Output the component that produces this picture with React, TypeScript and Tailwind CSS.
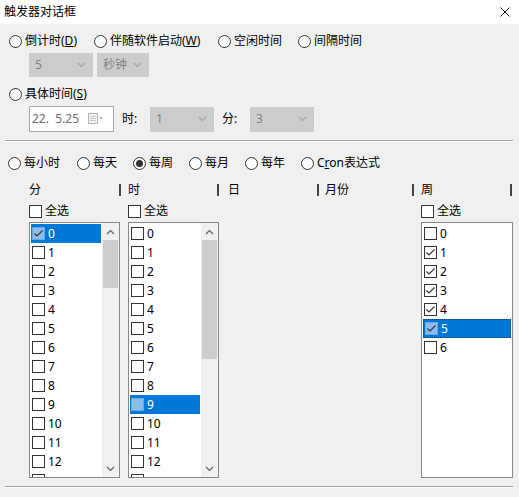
import type { ReactNode } from "react";

const FONT = { fontFamily: '"Noto Sans", "Noto Sans CJK SC", sans-serif' };

function Radio({ label, checked }: { label: ReactNode; checked?: boolean }) {
  return (
    <div className="flex h-[16px] items-center">
      <span className="flex h-[13px] w-[13px] shrink-0 items-center justify-center rounded-full border border-[#333] bg-white">
        {checked && <span className="h-[7px] w-[7px] rounded-full bg-[#333]" />}
      </span>
      <span className="ml-[3px] whitespace-nowrap">{label}</span>
    </div>
  );
}

function Check() {
  return (
    <svg width="11" height="11" viewBox="0 0 11 11" className="block">
      <polyline points="1.5,5.5 4,8 9.5,2.5" fill="none" stroke="#333" strokeWidth="1.1" />
    </svg>
  );
}

function Box({ checked, selected }: { checked?: boolean; selected?: boolean }) {
  return (
    <span
      className={`flex h-[13px] w-[13px] shrink-0 items-center justify-center border ${
        selected ? "border-[#6aa6e3] bg-[#8bbcee]" : "border-[#333] bg-white"
      }`}
    >
      {checked && <Check />}
    </span>
  );
}

function Chevron({ up, color = "#a6a6a6" }: { up?: boolean; color?: string }) {
  return (
    <svg width="9" height="6" viewBox="0 0 9 6" className="block">
      <polyline
        points={up ? "1,5 4.5,1.5 8,5" : "1,1 4.5,4.5 8,1"}
        fill="none"
        stroke={color}
        strokeWidth="1.2"
      />
    </svg>
  );
}

function Combo({ text, w, h = 24 }: { text: string; w: number; h?: number }) {
  return (
    <div
      className="flex items-center justify-between border border-[#cccccc] bg-[#cccccc] pl-[5px] pr-[6px] text-[#838383]"
      style={{ width: w, height: h }}
    >
      <span>{text}</span>
      <Chevron />
    </div>
  );
}

type Item = { n: number; checked?: boolean; selected?: boolean; focus?: boolean; noLabel?: boolean };

function ListBox({ items, thumb, w }: { items: Item[]; thumb?: number; w: number }) {
  return (
    <div className="flex h-[256px] overflow-hidden border border-[#828790] bg-white" style={{ width: w }}>
      <div className="flex-1 overflow-hidden pt-[1px] pl-[1px] pr-[1px]">
        {items.map((it) => (
          <div
            key={it.n}
            className={`flex h-[19px] items-center pl-[1px] ${
              it.selected ? "bg-[#0078d7] text-white" : "text-black"
            } ${it.focus ? "border border-dotted border-[#1b3f66] pl-0" : ""}`}
          >
            <Box checked={it.checked} selected={it.selected} />
            {!it.noLabel && <span className="ml-[3px]">{it.n}</span>}
          </div>
        ))}
      </div>
      {thumb !== undefined && (
        <div className="flex w-[17px] shrink-0 flex-col bg-[#f0f0f0]">
          <div className="flex h-[17px] items-center justify-center">
            <Chevron up color="#606060" />
          </div>
          <div className="flex-1">
            <div className="mx-[1px] bg-[#cdcdcd]" style={{ height: thumb }} />
          </div>
          <div className="flex h-[17px] items-center justify-center">
            <Chevron color="#606060" />
          </div>
        </div>
      )}
    </div>
  );
}

function Sep() {
  return <div className="mx-[5px] h-[2px] w-[508px] border-t border-b border-t-[#a0a0a0] border-b-white" />;
}

function Bar() {
  return <span className="block h-[12px] w-[2px] bg-[#444]" />;
}

export default function App() {
  const range = (n: number) => Array.from({ length: n }, (_, i) => i);
  // row 13 only peeks in at the bottom edge, so its number stays hidden
  const minutes: Item[] = range(14).map((n) => ({ n, checked: n === 0, selected: n === 0, noLabel: n === 13 }));
  const hours: Item[] = range(14).map((n) => ({ n, selected: n === 9, noLabel: n === 13 }));
  const week: Item[] = range(7).map((n) => ({
    n,
    checked: n >= 1 && n <= 5,
    selected: n === 5,
    focus: n === 5,
  }));

  return (
    <div className="min-h-screen w-[519px] bg-[#f0f0f0] text-[12px] leading-none text-black" style={FONT}>
      <div className="flex h-[24px] items-center justify-between bg-white pl-[4px] pr-[9px]">
        <span>触发器对话框</span>
        <svg width="10" height="10" viewBox="0 0 10 10">
          <path d="M0.5 0.5 L9.5 9.5 M9.5 0.5 L0.5 9.5" stroke="#111" strokeWidth="1" />
        </svg>
      </div>

      <div className="ml-[9px] mt-[9px] flex">
        <div className="w-[85px]">
          <Radio label={<>倒计时(<u>D</u>)</>} />
        </div>
        <div className="w-[124px]">
          <Radio label={<>伴随软件启动(<u>W</u>)</>} />
        </div>
        <div className="w-[80px]">
          <Radio label="空闲时间" />
        </div>
        <Radio label="间隔时间" />
      </div>

      <div className="ml-[29px] mt-[4px] flex gap-[4px]">
        <Combo text="5" w={64} />
        <Combo text="秒钟" w={52} />
      </div>

      <div className="ml-[9px] mt-[9px]">
        <Radio label={<>具体时间(<u>S</u>)</>} />
      </div>

      <div className="ml-[29px] mt-[4px] flex items-center">
        <div className="flex h-[26px] w-[85px] items-center border border-[#a8a8a8] bg-white pl-[2px] text-[#6d6d6d]">
          <span className="w-[56px]">22.&nbsp;&nbsp;5.25</span>
          <svg width="16" height="12" viewBox="0 0 16 12" className="block">
            <rect x="0.5" y="0.5" width="9" height="10" fill="#f4f4f4" stroke="#b8b8b8" />
            <path d="M2 3.5 H8 M2 5.5 H8 M2 7.5 H8" stroke="#c8c8c8" />
            <polygon points="11,4 15,4 13,6.5" fill="#b0b0b0" />
          </svg>
        </div>
        <span className="ml-[8px] w-[28px]">时:</span>
        <Combo text="1" w={64} h={25} />
        <span className="ml-[8px] w-[28px]">分:</span>
        <Combo text="3" w={64} h={25} />
      </div>

      <div className="mt-[8px]">
        <Sep />
      </div>

      <div className="ml-[8px] mt-[13px] flex">
        <div className="w-[69px]">
          <Radio label="每小时" />
        </div>
        <div className="w-[56px]">
          <Radio label="每天" />
        </div>
        <div className="w-[56px]">
          <Radio label="每周" checked />
        </div>
        <div className="w-[56px]">
          <Radio label="每月" />
        </div>
        <div className="w-[56px]">
          <Radio label="每年" />
        </div>
        <Radio label={<>C<u>r</u>on表达式</>} />
      </div>

      <div className="ml-[29px] mt-[11px] flex h-[16px] items-center">
        <span className="w-[90px]">分</span>
        <div className="w-[9px]"><Bar /></div>
        <span className="w-[89px]">时</span>
        <div className="w-[11px]"><Bar /></div>
        <span className="w-[89px]">日</span>
        <div className="w-[8px]"><Bar /></div>
        <span className="w-[87px]">月份</span>
        <div className="w-[9px]"><Bar /></div>
        <span className="w-[89px]">周</span>
        <Bar />
      </div>

      <div className="ml-[29px] mt-[5px] flex h-[16px] items-center">
        <div className="flex w-[99px] items-center">
          <Box />
          <span className="ml-[3px]">全选</span>
        </div>
        <div className="flex w-[293px] items-center">
          <Box />
          <span className="ml-[3px]">全选</span>
        </div>
        <div className="flex items-center">
          <Box />
          <span className="ml-[3px]">全选</span>
        </div>
      </div>

      <div className="ml-[29px] mt-[3px] flex">
        <ListBox items={minutes} thumb={48} w={91} />
        <div className="ml-[8px]">
          <ListBox items={hours} thumb={119} w={91} />
        </div>
        <div className="ml-[202px]">
          <ListBox items={week} w={92} />
        </div>
      </div>

      <div className="mt-[8px]">
        <Sep />
      </div>
    </div>
  );
}
